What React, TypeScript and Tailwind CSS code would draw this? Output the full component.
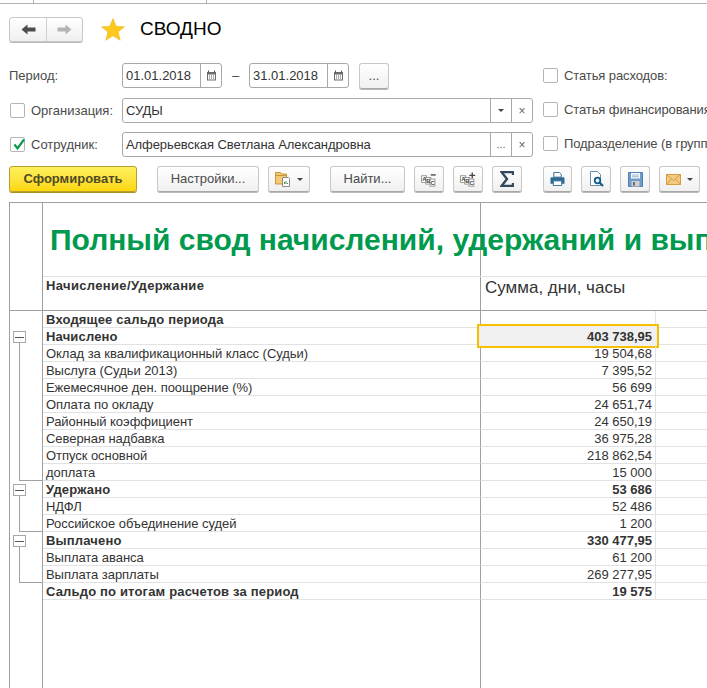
import React from 'react';

const FONT = "font-['Liberation_Sans',Arial,sans-serif]";

type Row = { label: string; value?: string; bold?: boolean; tree?: 'open' | 'line' | 'end' | 'none'; selected?: boolean };

const rows: Row[] = [
  { label: 'Входящее сальдо периода', bold: true },
  { label: 'Начислено', value: '403 738,95', bold: true, tree: 'open', selected: true },
  { label: 'Оклад за квалификационный класс (Судьи)', value: '19 504,68', tree: 'line' },
  { label: 'Выслуга (Судьи 2013)', value: '7 395,52', tree: 'line' },
  { label: 'Ежемесячное ден. поощрение (%)', value: '56 699', tree: 'line' },
  { label: 'Оплата по окладу', value: '24 651,74', tree: 'line' },
  { label: 'Районный коэффициент', value: '24 650,19', tree: 'line' },
  { label: 'Северная надбавка', value: '36 975,28', tree: 'line' },
  { label: 'Отпуск основной', value: '218 862,54', tree: 'line' },
  { label: 'доплата', value: '15 000', tree: 'end' },
  { label: 'Удержано', value: '53 686', bold: true, tree: 'open' },
  { label: 'НДФЛ', value: '52 486', tree: 'line' },
  { label: 'Российское объединение судей', value: '1 200', tree: 'end' },
  { label: 'Выплачено', value: '330 477,95', bold: true, tree: 'open' },
  { label: 'Выплата аванса', value: '61 200', tree: 'line' },
  { label: 'Выплата зарплаты', value: '269 277,95', tree: 'end' },
  { label: 'Сальдо по итогам расчетов за период', value: '19 575', bold: true },
];

function Btn({ className = '', children }: { className?: string; children: React.ReactNode }) {
  return (
    <button className={`h-[26px] flex items-center justify-center rounded-[3px] border border-[#c8c8c8] border-b-[#a8a8a8] bg-gradient-to-b from-white to-[#f0f0f0] shadow-[0_1px_0_#b8b8b8] text-[13px] text-[#4a4a4a] ${className}`}>
      {children}
    </button>
  );
}

function Check({ checked }: { checked?: boolean }) {
  return (
    <span className="relative w-[15px] h-[15px] shrink-0 rounded-[2px] border border-[#b4b4b4] bg-white">
      {checked && (
        <svg className="absolute left-[1px] -top-[1px]" width="14" height="14" viewBox="0 0 14 14">
          <path d="M2.5 7.5 L5.5 11.5 L12 2.5" fill="none" stroke="#0a9a4a" strokeWidth="2.2" />
        </svg>
      )}
    </span>
  );
}

function Caret() {
  return <span className="w-0 h-0 border-x-[3px] border-x-transparent border-t-[3px] border-t-[#444]" />;
}

function Calendar() {
  return (
    <svg width="11" height="11" viewBox="0 0 11 11">
      <path d="M1 2h9v8.5H1z" fill="#6b6b6b" />
      <path d="M2.5 0.5v2M8.5 0.5v2" stroke="#555" strokeWidth="1" />
      <path d="M2 4.5h7v5H2z" fill="#fff" />
      <path d="M3 5.5h1v1H3zM5 5.5h1v1H5zM7 5.5h1v1H7zM3 7.5h1v1H3zM5 7.5h1v1H5zM7 7.5h1v1H7z" fill="#555" />
    </svg>
  );
}

function DateField({ value }: { value: string }) {
  return (
    <div className="w-[100px] h-[25px] flex rounded-[3px] border border-[#a8a8a8] bg-white">
      <span className="flex-1 pl-[3px] leading-[23px] text-[13px] text-[#333]">{value}</span>
      <span className="w-[21px] flex items-center justify-center border-l border-[#a8a8a8]">
        <Calendar />
      </span>
    </div>
  );
}

function TextField({ value, mid }: { value: string; mid: React.ReactNode }) {
  return (
    <div className="w-[411px] h-[25px] flex rounded-[3px] border border-[#a8a8a8] bg-white">
      <span className="flex-1 pl-[3px] leading-[23px] text-[13px] tracking-[-0.08px] text-[#333]">{value}</span>
      <span className="w-[21px] flex items-center justify-center border-l border-[#a8a8a8] text-[11px] text-[#666]">{mid}</span>
      <span className="w-[21px] flex items-center justify-center border-l border-[#a8a8a8] text-[12px] text-[#666]">×</span>
    </div>
  );
}

function SideOption({ label, className = '' }: { label: string; className?: string }) {
  return (
    <div className={`h-[25px] flex items-center gap-[6px] whitespace-nowrap text-[13px] tracking-[-0.1px] text-[#4a4a4a] ${className}`}>
      <Check />
      <span>{label}</span>
    </div>
  );
}

function AbcIcon({ plus }: { plus?: boolean }) {
  return (
    <svg width="17" height="15" viewBox="0 0 20 18" fontFamily="Liberation Sans" fontWeight="700" fontSize="7" fill="#444">
      <rect x="0.5" y="4.5" width="6" height="8" fill="#fff" stroke="#8a8a8a" />
      <rect x="5.5" y="6.5" width="6" height="8" fill="#fff" stroke="#8a8a8a" />
      <rect x="10.5" y="8.5" width="6" height="8.5" fill="#fff" stroke="#8a8a8a" />
      <text x="1.2" y="11">A</text>
      <text x="6.2" y="13">B</text>
      <text x="11.2" y="15">C</text>
      {plus ? (
        <path d="M11 4h7M14.5 0.5v7" stroke="#444" strokeWidth="1.6" />
      ) : (
        <path d="M11.5 3.5h6" stroke="#666" strokeWidth="2" />
      )}
    </svg>
  );
}

function TreeCell({ tree }: { tree?: Row['tree'] }) {
  return (
    <div className="relative w-[33px] shrink-0 border-r border-[#a0a0a0]">
      {tree === 'open' && (
        <>
          <span className="absolute left-[9px] top-[15px] bottom-0 w-px bg-[#a0a0a0]" />
          <span className="absolute left-[3px] top-[3px] w-[13px] h-[12px] flex items-center justify-center border border-[#a8a8a8] bg-white">
            <span className="w-[9px] h-px bg-[#555]" />
          </span>
        </>
      )}
      {tree === 'line' && <span className="absolute left-[9px] top-0 bottom-0 w-px bg-[#a0a0a0]" />}
      {tree === 'end' && (
        <>
          <span className="absolute left-[9px] top-0 bottom-0 w-px bg-[#a0a0a0]" />
          <span className="absolute left-[9px] right-0 bottom-0 h-px bg-[#a0a0a0]" />
        </>
      )}
    </div>
  );
}

function TableRow({ row }: { row: Row }) {
  return (
    <div className="flex h-[17px] shrink-0">
      <TreeCell tree={row.tree} />
      <div className={`w-[438px] shrink-0 border-r border-r-[#a0a0a0] border-b border-b-[#e2e2e2] pl-[3px] pt-[1px] leading-[15px] whitespace-nowrap ${row.bold ? 'font-bold tracking-[0.17px]' : 'tracking-[-0.05px]'}`}>
        {row.label}
      </div>
      <div className={`relative w-[175px] shrink-0 border-r border-r-[#e2e2e2] border-b border-b-[#e2e2e2] pr-[3px] pt-[1px] text-right leading-[15px] ${row.bold ? 'font-bold' : ''}`}>
        {row.selected && <span className="absolute -left-[4px] -right-[4px] -top-[4px] -bottom-[4px] border-2 border-[#f5c000] bg-[#f0f0f0]" />}
        <span className="relative">{row.value}</span>
      </div>
      <div className="flex-1 border-b border-[#e2e2e2]" />
    </div>
  );
}

export default function App() {
  return (
    <div className={`w-[707px] h-[688px] overflow-hidden bg-white flex flex-col ${FONT}`}>
      <div className="h-[4px] shrink-0 flex border-b border-[#b0b0b0]">
        <span className="w-[34px] border-r border-[#b0b0b0]" />
        <span className="w-[173px] border-r border-[#b0b0b0]" />
      </div>

      {/* Title bar */}
      <div className="flex items-center h-[26px] mt-[12px] ml-[9px] shrink-0">
        <div className="flex w-[74px] h-[25px] rounded-[3px] border border-[#c8c8c8] bg-gradient-to-b from-white to-[#f0f0f0] shadow-[0_1px_0_#b8b8b8]">
          <span className="w-[37px] flex items-center justify-center border-r border-[#d0d0d0]">
            <svg width="15" height="11" viewBox="0 0 15 11"><path d="M0.5 5.5 L6.5 0.5 V3.5 H14.5 V7.5 H6.5 V10.5 Z" fill="#4d4d4d" /></svg>
          </span>
          <span className="flex-1 flex items-center justify-center">
            <svg width="15" height="11" viewBox="0 0 15 11"><path d="M14.5 5.5 L8.5 0.5 V3.5 H0.5 V7.5 H8.5 V10.5 Z" fill="#b4b4b4" /></svg>
          </span>
        </div>
        <svg className="ml-[18px]" width="24" height="23" viewBox="0 0 24 23">
          <path d="M12 0.5 L15.2 8.2 L23.5 8.8 L17.1 14.1 L19.2 22.3 L12 17.8 L4.8 22.3 L6.9 14.1 L0.5 8.8 L8.8 8.2 Z" fill="#fcc81e" stroke="#e8b010" strokeWidth="0.5" />
        </svg>
        <span className="ml-[15px] text-[19px] text-black">СВОДНО</span>
      </div>

      {/* Filters */}
      <div className="flex mt-[21px] ml-[9px] shrink-0">
        <div className="w-[534px] shrink-0 flex flex-col">
          <div className="flex items-center h-[25px] mb-[10px]">
            <span className="w-[113px] text-[13px] text-[#4a4a4a]">Период:</span>
            <DateField value="01.01.2018" />
            <span className="w-[27px] text-center text-[13px] text-[#4a4a4a]">–</span>
            <DateField value="31.01.2018" />
            <Btn className="w-[30px] ml-[10px] text-[11px]">...</Btn>
          </div>
          <div className="flex items-center h-[25px] mb-[9px]">
            <div className="w-[113px] pl-[1px] flex items-center gap-[6px] text-[13px] text-[#4a4a4a]">
              <Check /> <span>Организация:</span>
            </div>
            <TextField value="СУДЫ" mid={<Caret />} />
          </div>
          <div className="flex items-center h-[25px]">
            <div className="w-[113px] pl-[1px] flex items-center gap-[6px] text-[13px] text-[#4a4a4a]">
              <Check checked /> <span>Сотрудник:</span>
            </div>
            <TextField value="Алферьевская Светлана Александровна" mid="..." />
          </div>
        </div>
        <div className="flex flex-col">
          <SideOption label="Статья расходов:" className="mb-[9px]" />
          <SideOption label="Статья финансирования" className="mb-[9px]" />
          <SideOption label="Подразделение (в группе)" />
        </div>
      </div>

      {/* Toolbar */}
      <div className="flex items-center mt-[9px] ml-[9px] shrink-0">
        <button className="w-[128px] h-[26px] rounded-[3px] border border-[#b8a030] bg-gradient-to-b from-[#fdf05a] to-[#fdd800] shadow-[0_1px_0_#a89020] text-[13px] font-bold text-[#4f4a24]">
          Сформировать
        </button>
        <Btn className="w-[102px] ml-[20px]">Настройки...</Btn>
        <Btn className="w-[42px] ml-[9px] gap-[6px]">
          <svg width="16" height="16" viewBox="0 0 16 16">
            <path d="M0.5 1.5h5l1 1.5h5v10h-11z" fill="#f3c877" stroke="#c9963a" />
            <path d="M0.5 4.5h11" stroke="#c9963a" />
            <path d="M7.5 6.5h6l1 1v8h-7z" fill="#fff" stroke="#8a8a8a" />
            <path d="M9.5 13v-2M11 13v-3M12.5 13v-1" stroke="#4a8a5a" />
          </svg>
          <Caret />
        </Btn>
        <Btn className="w-[75px] ml-[20px]">Найти...</Btn>
        <Btn className="w-[30px] ml-[9px]"><AbcIcon /></Btn>
        <Btn className="w-[30px] ml-[9px]"><AbcIcon plus /></Btn>
        <Btn className="w-[30px] ml-[9px]">
          <svg width="14" height="16" viewBox="0 0 14 16"><path d="M13 4V1H1.5L7 8L1.5 15H13V12" fill="none" stroke="#34495e" strokeWidth="2.4" /></svg>
        </Btn>
        <Btn className="w-[29px] ml-[21px]">
          <svg width="15" height="14" viewBox="0 0 16 15">
            <path d="M4 0.5h6l2 2v3H4z" fill="#fff" stroke="#2f6a93" />
            <path d="M0.5 6.5a1 1 0 011-1h13a1 1 0 011 1v6h-15z" fill="#2f6a93" />
            <path d="M3.5 9.5h9v5h-9z" fill="#fff" stroke="#2f6a93" />
          </svg>
        </Btn>
        <Btn className="w-[30px] ml-[9px]">
          <svg width="15" height="16" viewBox="0 0 15 16">
            <path d="M1.5 0.5h7l3 3v11h-10z" fill="#fff" stroke="#6d8ca3" />
            <circle cx="8.5" cy="9.5" r="2.8" fill="#e8f2f8" stroke="#0f5c8a" strokeWidth="1.8" />
            <path d="M10.5 11.5l3.5 3.5" stroke="#0f5c8a" strokeWidth="2.2" />
          </svg>
        </Btn>
        <Btn className="w-[30px] ml-[9px]">
          <svg width="15" height="15" viewBox="0 0 15 15">
            <path d="M0.5 0.5h14v14h-14z" fill="#6d9ccb" stroke="#4f7fae" />
            <path d="M3 1h9v5.5H3z" fill="#fff" />
            <path d="M4 3h7M4 4.8h7" stroke="#8fb2d4" />
            <path d="M3.5 9h8v5.5h-8z" fill="#cfcfcf" />
            <path d="M5 10h2v3.5H5z" fill="#6a6a6a" />
          </svg>
        </Btn>
        <Btn className="w-[41px] ml-[9px] gap-[6px]">
          <svg width="15" height="11" viewBox="0 0 15 11">
            <path d="M0.5 0.5h14v10h-14z" fill="#f3cb85" stroke="#d59d3f" />
            <path d="M0.5 0.5l7 6 7-6M0.5 10.5l5-5.5M14.5 10.5l-5-5.5" fill="none" stroke="#d59d3f" />
          </svg>
          <Caret />
        </Btn>
      </div>

      {/* Report */}
      <div className="mt-[10px] ml-[9px] flex-1 min-h-0 flex flex-col border-t border-l border-[#a0a0a0] text-[13px] text-[#333]">
        <div className="h-[108px] shrink-0 flex border-b border-[#a0a0a0]">
          <div className="w-[33px] shrink-0 border-r border-[#a0a0a0]" />
          <div className="w-[438px] shrink-0 border-r border-[#a0a0a0] flex flex-col">
            <div className="h-[74px] shrink-0 flex items-center pl-[7px] border-b border-[#e2e2e2] -mr-[227px]">
              <span className="text-[30px] font-bold text-[#009a4e] whitespace-nowrap">Полный свод начислений, удержаний и выплат</span>
            </div>
            <div className="pl-[3px] pt-[1px] leading-[15px] font-bold tracking-[0.35px] whitespace-nowrap">Начисление/Удержание</div>
          </div>
          <div className="flex-1 flex flex-col">
            <div className="h-[74px] shrink-0" />
            <div className="pl-[4px] pt-[1px] leading-[20px] text-[17px]">Сумма, дни, часы</div>
          </div>
        </div>
        {rows.map((row) => (
          <TableRow key={row.label} row={row} />
        ))}
        <div className="flex-1 flex">
          <div className="w-[33px] shrink-0 border-r border-[#a0a0a0]" />
          <div className="w-[438px] shrink-0 border-r border-[#a0a0a0]" />
        </div>
      </div>
    </div>
  );
}
